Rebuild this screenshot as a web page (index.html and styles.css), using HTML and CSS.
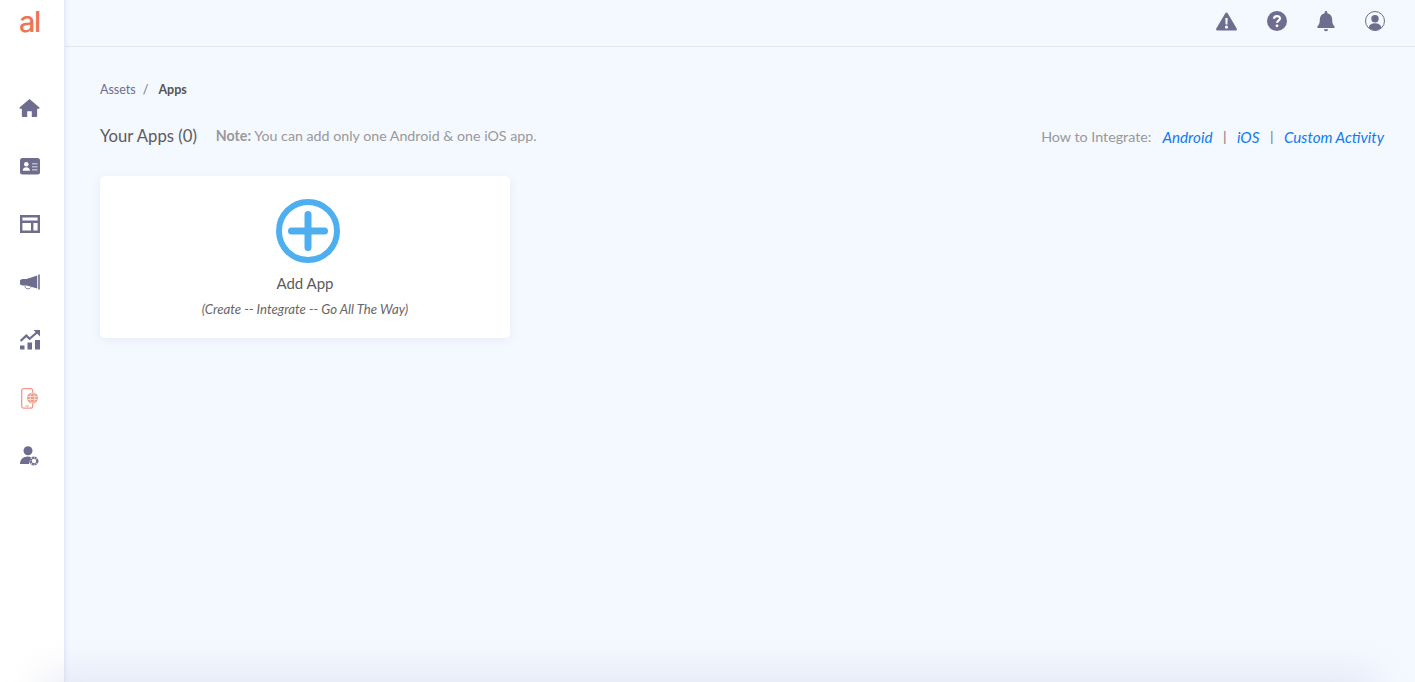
FILE: index.html
```html
<!DOCTYPE html>
<html lang="en">
<head>
<meta charset="utf-8">
<title>Apps</title>
<link rel="stylesheet" href="styles.css">
</head>
<body>
<div class="app">
  <aside class="sidebar">
    <div class="logo">al</div>
    <nav class="nav">
      <a class="nav-item"><svg width="21" height="20" viewBox="0 0 22 20"><path class="f" d="M11 .5 .6 9.600c-.5.500-.2 1.200.5 1.200H3v7.700c0 .6.4 1 1 1h4.600v-6.200h4.800v6.200H18c.6 0 1-.4 1-1v-7.700h1.900c.7 0 1-.7.500-1.200Z"/></svg></a>
      <a class="nav-item"><svg width="20" height="17" viewBox="0 0 20 17"><rect class="f" width="20" height="16.500" rx="2.500"/><circle cx="6.300" cy="6.300" r="2.300" fill="#fff"/><path fill="#fff" d="M2.700 12.800c0-2.200 1.500-3.500 3.600-3.500s3.600 1.300 3.600 3.500Z"/><path fill="#b9b8cc" d="M12 5h5.500v1.500H12zM12 8h5.500v1.500H12zM12 11h5.500v1.500H12z"/></svg></a>
      <a class="nav-item"><svg width="20" height="18" viewBox="0 0 20 18"><path class="f" fill-rule="evenodd" d="M0 0h20v18H0Zm2.400 2.400v3.200h15.200V2.400Zm0 5.600v7.600h8.600V8Zm11 0v7.600h4.200V8Z"/></svg></a>
      <a class="nav-item"><svg width="20" height="16" viewBox="0 0 20 16"><path class="f" d="M18.200 .5h1.600v15h-1.600ZM17.200 1.500v13L6.500 11.500h-4L0 10.500V6l2.500-1h4Z"/><path fill="none" stroke="#6e6d8f" stroke-width=".8" d="M5 12c0 2.200 1.500 2.800 3 2.800s2.500-.5 3-1.500"/></svg></a>
      <a class="nav-item"><svg width="20" height="20" viewBox="0 0 20 20"><path class="f" d="M0 15.500h4.500V19.500H0ZM7.500 12.500H12v7H7.500ZM15 10h5v9.500h-5Z"/><path fill="none" stroke="#6e6d8f" stroke-width="2.200" d="m.6 11 5.700-5.400 3.300 3.200L18 1.500"/><path class="f" d="M13.500 0H20v6.500Z"/></svg></a>
      <a class="nav-item"><svg width="18" height="21" viewBox="0 0 18 21"><rect x=".7" y=".7" width="11" height="19.500" rx="2" fill="none" stroke="#f39a88" stroke-width="1.300"/><path fill="#f39a88" d="M4.500 17.500h3.500v1H4.500Z"/><circle cx="11.500" cy="10" r="5.500" fill="#f39a88"/><path fill="none" stroke="#fff" stroke-width=".6" d="M6.500 8.500h10M6.500 11.500h10"/><ellipse cx="11.500" cy="10" rx="2.300" ry="5" fill="none" stroke="#fff" stroke-width=".6"/></svg></a>
      <a class="nav-item"><svg width="19" height="20" viewBox="0 0 19 20"><circle class="f" cx="8" cy="4.800" r="4.500"/><path class="f" d="M0 18c0-4.500 3-7.500 8-7.500 1 0 2 .2 2.800.5L9 18Z"/><circle cx="14" cy="15" r="3.300" fill="none" stroke="#6e6d8f" stroke-width="2.400" stroke-dasharray="2.100 .5"/><circle cx="14" cy="15" r="1.100" fill="#fff"/></svg></a>
    </nav>
  </aside>
  <div class="main">
    <header class="topbar">
      <svg width="21" height="19" viewBox="0 0 21 18"><path class="f" fill-rule="evenodd" d="M10.500 0c.5 0 .9.300 1.200.8l9 15.200c.5.900-.1 2-1.200 2H1.500C.4 18-.2 16.900.3 16l9-15.200c.3-.5.7-.8 1.200-.8ZM9.300 5.500l.3 6.500h1.800l.3-6.500ZM10.500 13a1.600 1.600 0 1 0 0 3.200 1.600 1.600 0 0 0 0-3.200Z"/></svg>
      <svg width="20" height="20" viewBox="0 0 20 20"><circle class="f" cx="10" cy="10" r="10"/><path fill="none" stroke="#fff" stroke-width="2.200" d="M7 7.800c0-3.600 6-3.600 6-.2 0 2.200-3 2-3 4.200"/><circle cx="10" cy="14.800" r="1.400" fill="#fff"/></svg>
      <svg width="18" height="21" viewBox="0 0 18 21"><path class="f" d="M9 0c.8 0 1.300.6 1.300 1.400v.8c3 .6 4.900 3 4.900 6.300 0 4.200 1.100 5.700 2.400 7 .5.500.2 1.500-.7 1.500H1.100c-.9 0-1.200-1-.7-1.500 1.300-1.300 2.400-2.800 2.400-7 0-3.300 1.900-5.700 4.900-6.300v-.8C7.700.6 8.200 0 9 0ZM6.900 18.300h4.200c0 1-.9 2-2.100 2s-2.100-1-2.100-2Z"/></svg>
      <svg width="20" height="20" viewBox="0 0 20 20"><circle cx="10" cy="10" r="9.500" fill="none" stroke="#6e6d8f"/><circle class="f" cx="10" cy="7.800" r="3.700"/><path class="f" d="M3.600 16.500c.8-3 3.300-4.200 6.400-4.200s5.600 1.200 6.400 4.200c-1.600 1.600-3.900 3-6.400 3s-4.800-1.400-6.400-3Z"/></svg>
    </header>
    <main class="content">
      <div class="crumbs"><span class="crumb">Assets</span><span class="sep">/</span><span class="crumb-current">Apps</span></div>
      <div class="title-row">
        <div class="title-left">
          <h1 class="title">Your Apps (0)</h1>
          <p class="note"><b>Note:</b> You can add only one Android &amp; one iOS app.</p>
        </div>
        <div class="links">
          <span class="links-label">How to Integrate:</span>
          <a class="link">Android</a><span class="bar">|</span><a class="link">iOS</a><span class="bar">|</span><a class="link">Custom Activity</a>
        </div>
      </div>
      <section class="card">
        <svg class="plus" width="64" height="64" viewBox="0 0 64 64"><circle cx="32" cy="32" r="29" fill="none" stroke="#4dafef" stroke-width="6"/><path fill="none" stroke="#4dafef" stroke-width="7" stroke-linecap="round" d="M32 15.500v33M15.500 32h33"/></svg>
        <div class="card-title">Add App</div>
        <div class="card-sub">(Create -- Integrate -- Go All The Way)</div>
      </section>
    </main>
  </div>
</div>
<div class="bottom-fade"></div>
</body>
</html>
```
FILE: styles.css
```css
* { box-sizing: border-box; }
html, body { margin: 0; height: 100%; overflow: hidden; }
body { font-family: "Lato", "Noto Sans", sans-serif; background: #f4f8ff; color: #555; position: relative; }
.f { fill: #6e6d8f; }
.app { display: flex; height: 682px; }
.sidebar { width: 65px; flex: none; background: #fff; border-right: 1px solid #e6eaf8; box-shadow: 1px 0 4px rgba(110,120,190,.12); z-index: 1; }
.logo { height: 46px; text-align: center; font-family: "Inter", sans-serif; font-size: 29px; font-weight: 500; line-height: 43px; letter-spacing: -1.500px; color: #ee7457; padding-right: 5px; }
.nav { display: flex; flex-direction: column; padding-top: 33px; }
.nav-item { height: 58px; display: flex; align-items: center; justify-content: center; padding-right: 5px; }
.main { flex: 1; min-width: 0; display: flex; flex-direction: column; }
.topbar { height: 47px; flex: none; display: flex; align-items: center; justify-content: flex-end; gap: 30px; padding: 0 30px 4px 0; border-bottom: 1px solid #e3e6f1; }
.content { padding: 34px 31px 0 35px; }
.crumbs { display: flex; align-items: center; font-size: 12.500px; line-height: 17px; }
.crumb { color: #6e6d8f; }
.sep { margin: 0 10px 0 7px; color: #6e6d8f; }
.crumb-current { color: #555; font-weight: 700; }
.title-row { display: flex; justify-content: space-between; align-items: center; margin-top: 27px; height: 22px; }
.title-left { display: flex; align-items: center; gap: 19px; }
.title { margin: 0; font-size: 16.700px; font-weight: 400; color: #5c5c5c; line-height: 22px; }
.note { margin: 0; font-size: 14.220px; color: #999; line-height: 20px; }
.note b { font-weight: 700; }
.links { display: flex; align-items: center; font-size: 14.300px; line-height: 20px; padding-top: 2px; }
.links-label { color: #999; margin-right: 11px; }
.link { color: #0f7bf0; font-style: italic; font-size: 15.200px; }
.bar { color: #777; margin: 0 10.500px; }
.card { width: 410px; height: 162px; margin-top: 29px; background: #fff; border-radius: 5px; box-shadow: 0 2px 10px rgba(120,130,180,.1); display: flex; flex-direction: column; align-items: center; padding-top: 23px; }
.plus { margin-left: 6px; }
.card-title { margin-top: 10px; font-size: 15px; line-height: 20px; color: #5c5c5c; }
.card-sub { margin-top: 6px; font-size: 13.200px; line-height: 20px; font-style: italic; color: #666; }
.bottom-fade { position: absolute; left: 50px; right: 50px; bottom: -30px; height: 30px; box-shadow: 0 0 36px 8px rgba(190,195,225,.32); z-index: 2; pointer-events: none; }
```
